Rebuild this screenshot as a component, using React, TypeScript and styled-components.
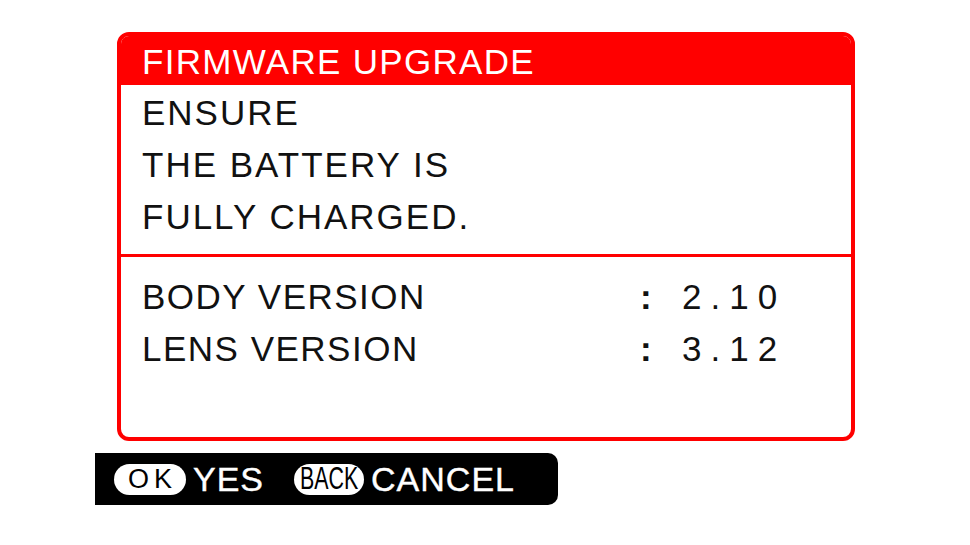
import { Fragment } from "react";
import styled, { createGlobalStyle } from "styled-components";

const GlobalStyle = createGlobalStyle`
    html, body {
        margin: 0;
        padding: 0;
        background: #ffffff;
    }

    body {
        font-family: "Liberation Sans", Arial, sans-serif;
    }
`;

const Screen = styled.div`
    width: 970px;
    height: 545px;
    box-sizing: border-box;
    padding: 32px 0 0 95px;
    display: flex;
    flex-direction: column;
    align-items: flex-start;
    gap: 12px;
    background: #ffffff;
`;

const Dialog = styled.div`
    margin-left: 22px;
    width: 738px;
    height: 409px;
    box-sizing: border-box;
    border: 4px solid #ff0000;
    border-radius: 12px;
    overflow: hidden;
    display: flex;
    flex-direction: column;
    background: #ffffff;
`;

const Header = styled.div`
    height: 49px;
    flex: none;
    background: #ff0000;
    color: #ffffff;
    display: flex;
    align-items: center;
    padding: 2px 0 0 21px;
    box-sizing: border-box;
    font-size: 35px;
    letter-spacing: 1.3px;
`;

const Message = styled.div`
    height: 172px;
    flex: none;
    box-sizing: border-box;
    padding: 2px 0 0 21px;
    border-bottom: 3px solid #ff0000;
`;

const Line = styled.div`
    font-size: 35px;
    line-height: 52px;
    letter-spacing: 2px;
    color: #111111;
`;

const Versions = styled.div`
    flex: 1;
    padding: 14px 0 0 21px;
    display: grid;
    grid-template-columns: 498px 42px auto;
    grid-auto-rows: 52px;
    align-items: center;
    justify-content: start;
    font-size: 35px;
    color: #111111;
`;

const Label = styled.span`
    letter-spacing: 1.5px;
`;

const Colon = styled.span`
    font-weight: 700;
`;

const Value = styled.span`
    letter-spacing: 9px;
`;

const ButtonBar = styled.div`
    width: 463px;
    height: 52px;
    box-sizing: border-box;
    padding-left: 19px;
    background: #000000;
    border-radius: 0 10px 10px 0;
    display: flex;
    align-items: center;
    color: #ffffff;
`;

const Key = styled.span<{ $w: number }>`
    width: ${(p) => p.$w}px;
    height: 31px;
    border-radius: 16px;
    background: #ffffff;
    color: #000000;
    display: flex;
    align-items: center;
    justify-content: center;
    flex: none;
`;

const KeyText = styled.span<{ $squeeze?: boolean }>`
    display: inline-block;
    font-size: ${(p) => (p.$squeeze ? 31 : 27)}px;
    letter-spacing: ${(p) => (p.$squeeze ? 0 : 5)}px;
    margin-right: ${(p) => (p.$squeeze ? 0 : -5)}px;
    transform: ${(p) => (p.$squeeze ? "scaleX(0.69)" : "none")};
`;

const Action = styled.span<{ $gap: number }>`
    font-size: 34px;
    letter-spacing: 1px;
    margin-left: 7px;
    margin-right: ${(p) => p.$gap}px;
    -webkit-text-stroke: 0.4px #ffffff;
`;

export default function App() {
    const versions = [
        { label: "BODY VERSION", value: "2.10" },
        { label: "LENS VERSION", value: "3.12" },
    ];

    return (
        <>
            <GlobalStyle />
            <Screen>
                <Dialog>
                    <Header>FIRMWARE UPGRADE</Header>
                    <Message>
                        <Line>ENSURE</Line>
                        <Line>THE BATTERY IS</Line>
                        <Line>FULLY CHARGED.</Line>
                    </Message>
                    <Versions>
                        {versions.map((v) => (
                            <Fragment key={v.label}>
                                <Label>{v.label}</Label>
                                <Colon>:</Colon>
                                <Value>{v.value}</Value>
                            </Fragment>
                        ))}
                    </Versions>
                </Dialog>
                <ButtonBar>
                    <Key $w={72}>
                        <KeyText>OK</KeyText>
                    </Key>
                    <Action $gap={30}>YES</Action>
                    <Key $w={70}>
                        <KeyText $squeeze>BACK</KeyText>
                    </Key>
                    <Action $gap={0}>CANCEL</Action>
                </ButtonBar>
            </Screen>
        </>
    );
}
